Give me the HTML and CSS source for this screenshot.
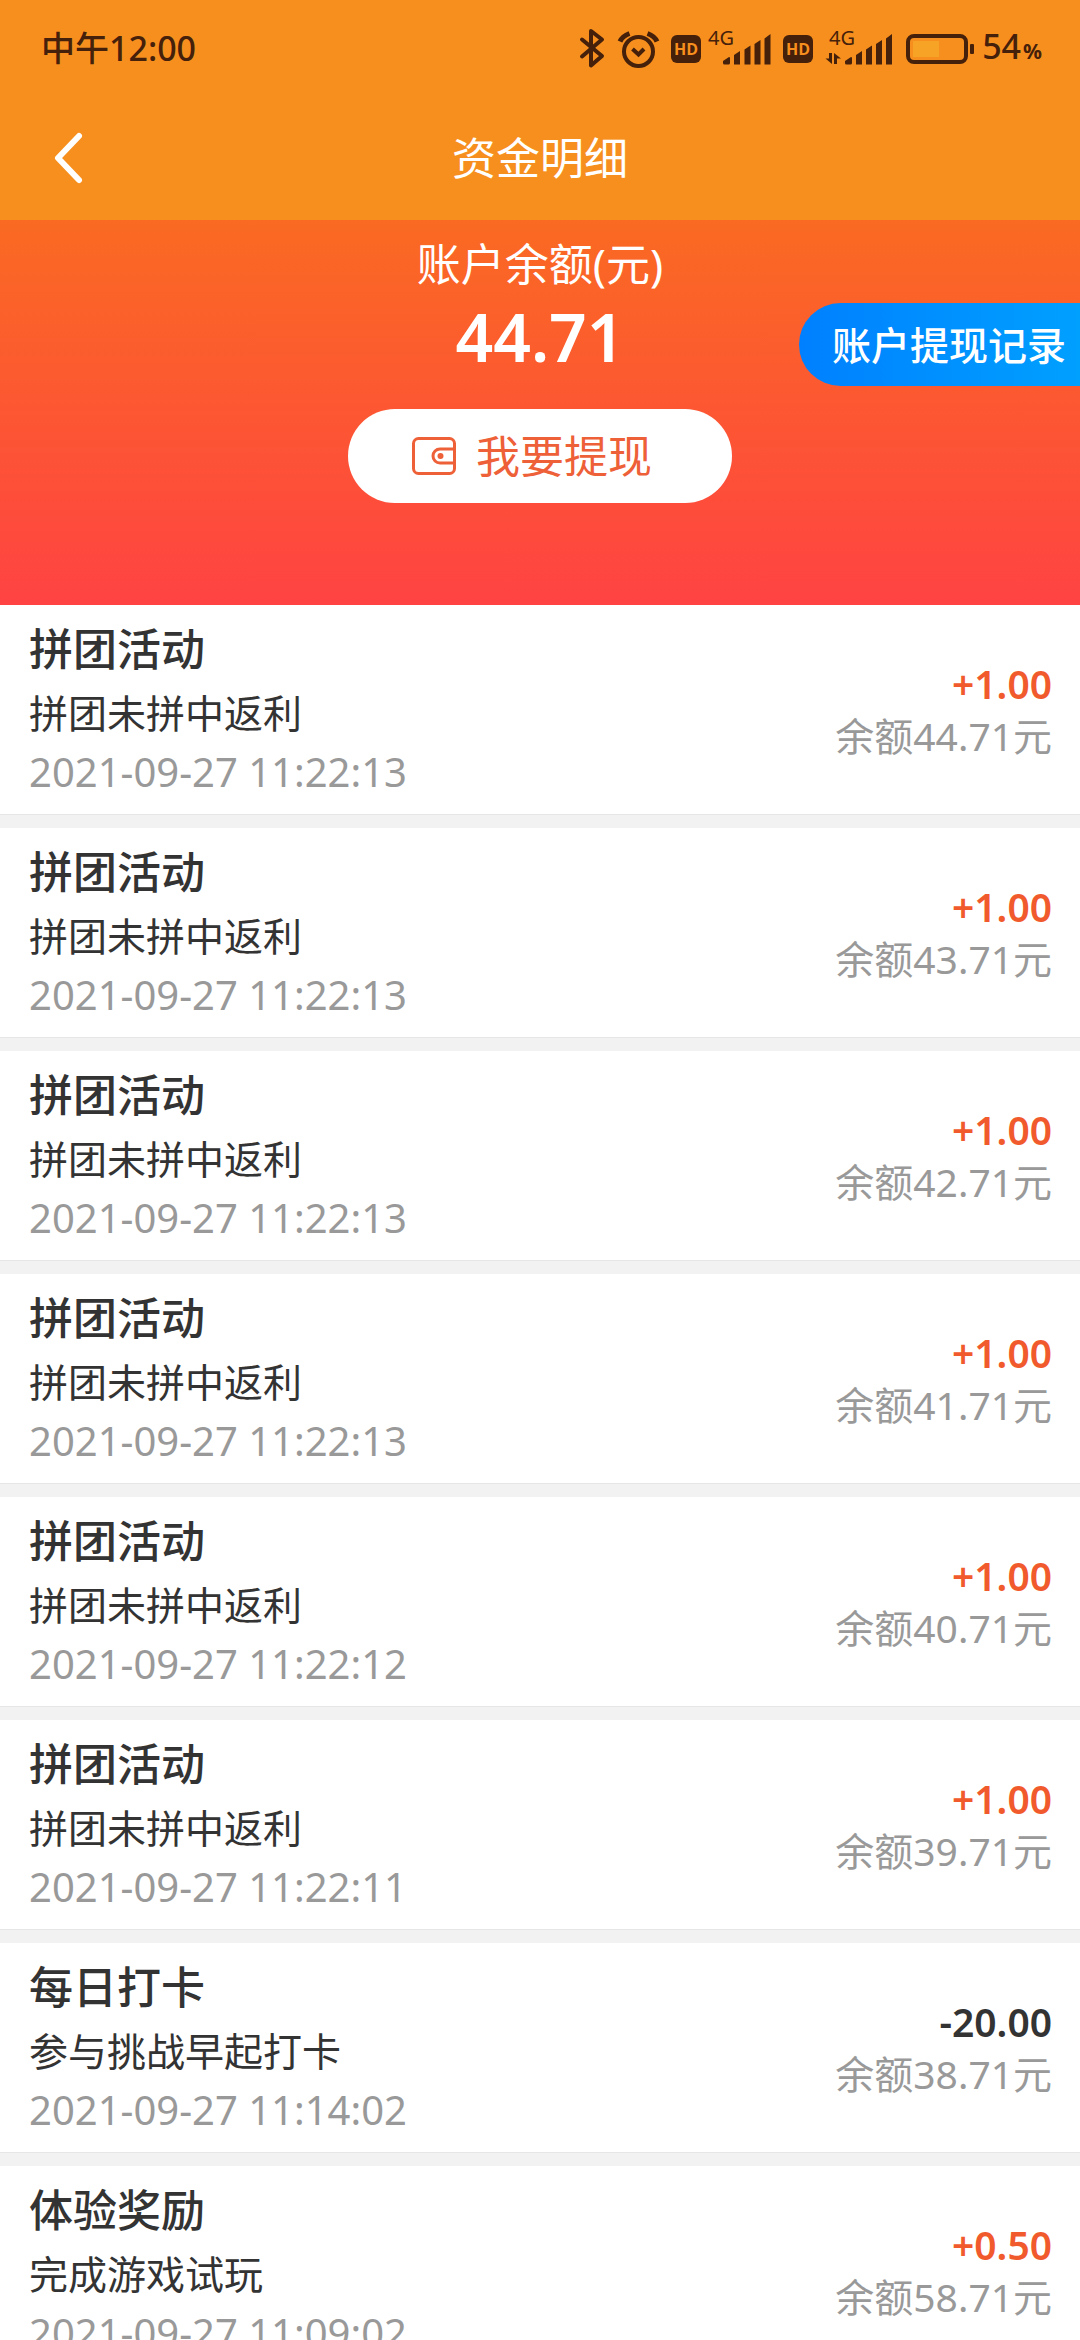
FILE: index.html
```html
<!DOCTYPE html>
<html lang="zh-CN">
<head>
<meta charset="utf-8">
<meta name="viewport" content="width=device-width, initial-scale=1">
<title>资金明细</title>
<link rel="stylesheet" href="styles.css">
</head>
<body>
<div class="app">
  <div class="status">
    <span class="status-time">中午12:00</span>
    <div class="status-icons">
      <svg width="34" height="44" viewBox="0 0 34 44" fill="none" stroke="#45200a" stroke-width="4" stroke-linejoin="round" stroke-linecap="round"><path d="M5 13.500L25 30L14 39.500V5L25 13.500L5 30.500"/></svg>
      <svg width="44" height="44" viewBox="0 0 44 44" fill="none" stroke="#45200a"><circle cx="21.500" cy="25.500" r="14.500" stroke-width="4"/><path d="M15.500 23L21.500 28.500L27 23" stroke-width="4"/><path d="M3 15.500Q5.500 10 12.500 7.500M40 15.500Q37.500 10 30.500 7.500" stroke-width="5"/></svg>
      <svg width="34" height="44" viewBox="0 0 34 44"><rect x="4" y="9" width="30" height="28" rx="6" fill="#45200a"/><text class="hd" x="19" y="29" text-anchor="middle">HD</text></svg>
      <svg width="66" height="44" viewBox="0 0 66 44" fill="#45200a"><text class="net" x="1" y="19">4G</text><path d="M16 35L22 31Q23 31 23 32V37Q23 38.500 21.500 38.500H17.500Q16 38.500 16 37ZM27 29L33 25V38.500H27ZM37.500 23.500L43.500 19.500V38.500H37.500ZM47.500 18L53.500 14V38.500H47.500ZM57.500 12.500L63.500 8V38.500H57.500Z"/></svg>
      <svg width="34" height="44" viewBox="0 0 34 44"><rect x="4" y="9" width="30" height="28" rx="6" fill="#45200a"/><text class="hd" x="19" y="29" text-anchor="middle">HD</text></svg>
      <svg width="76" height="44" viewBox="0 0 76 44" fill="#45200a"><text class="net" x="10" y="19">4G</text><path d="M10 27H13V38L6.500 32.500H10ZM15 38V27L22 32.500H18V38Z"/><path d="M26 35L32 31Q33 31 33 32V37Q33 38.500 31.500 38.500H27.500Q26 38.500 26 37ZM37 29L43 25V38.500H37ZM47 23.500L53 19.500V38.500H47ZM57 18L63 14V38.500H57ZM67 12.500L73 8V38.500H67Z"/></svg>
      <svg width="75" height="44" viewBox="0 0 75 44"><rect x="7" y="10" width="58" height="26" rx="6" fill="none" stroke="#45200a" stroke-width="4"/><rect x="12" y="15" width="26" height="16" fill="#f7a325"/><rect x="69" y="18" width="4" height="10" rx="1" fill="#45200a"/></svg>
      <span class="battery-text">54<small>%</small></span>
    </div>
  </div>
  <header class="nav">
    <button class="back" type="button" aria-label="返回">
      <svg width="36" height="60" viewBox="0 0 36 60" fill="none" stroke="#fff" stroke-width="6" stroke-linecap="round" stroke-linejoin="round"><path d="M29 8L8 30L29 52"/></svg>
    </button>
    <h1 class="nav-title">资金明细</h1>
  </header>
  <section class="hero">
    <p class="hero-label">账户余额(元)</p>
    <p class="hero-amount">44.71</p>
    <button class="withdraw" type="button">
      <svg width="44" height="38" viewBox="0 0 44 38" fill="none" stroke="#ee6038" stroke-width="3"><rect x="1.500" y="1.500" width="41" height="35" rx="5"/><path d="M42 12H28a7 7 0 0 0 0 14H42"/><circle cx="28.500" cy="19" r="3" fill="#ee6038" stroke="none"/></svg>
      <span>我要提现</span>
    </button>
    <a class="records" href="#records">账户提现记录</a>
  </section>
  <ul class="list">
    <li class="row"><div class="info"><h2>拼团活动</h2><p>拼团未拼中返利</p><time>2021-09-27 11:22:13</time></div><div class="sum"><strong>+1.00</strong><span>余额44.71元</span></div></li>
    <li class="row"><div class="info"><h2>拼团活动</h2><p>拼团未拼中返利</p><time>2021-09-27 11:22:13</time></div><div class="sum"><strong>+1.00</strong><span>余额43.71元</span></div></li>
    <li class="row"><div class="info"><h2>拼团活动</h2><p>拼团未拼中返利</p><time>2021-09-27 11:22:13</time></div><div class="sum"><strong>+1.00</strong><span>余额42.71元</span></div></li>
    <li class="row"><div class="info"><h2>拼团活动</h2><p>拼团未拼中返利</p><time>2021-09-27 11:22:13</time></div><div class="sum"><strong>+1.00</strong><span>余额41.71元</span></div></li>
    <li class="row"><div class="info"><h2>拼团活动</h2><p>拼团未拼中返利</p><time>2021-09-27 11:22:12</time></div><div class="sum"><strong>+1.00</strong><span>余额40.71元</span></div></li>
    <li class="row"><div class="info"><h2>拼团活动</h2><p>拼团未拼中返利</p><time>2021-09-27 11:22:11</time></div><div class="sum"><strong>+1.00</strong><span>余额39.71元</span></div></li>
    <li class="row"><div class="info"><h2>每日打卡</h2><p>参与挑战早起打卡</p><time>2021-09-27 11:14:02</time></div><div class="sum"><strong class="out">-20.00</strong><span>余额38.71元</span></div></li>
    <li class="row"><div class="info"><h2>体验奖励</h2><p>完成游戏试玩</p><time>2021-09-27 11:09:02</time></div><div class="sum"><strong>+0.50</strong><span>余额58.71元</span></div></li>
  </ul>
</div>
</body>
</html>
```
FILE: styles.css
```css
* {
  box-sizing: border-box;
}

body,
h1,
h2,
p,
ul {
  margin: 0;
  padding: 0;
}

body {
  font-family: "Noto Sans", "Noto Sans CJK SC", sans-serif;
  color: #333;
  background: #f2f2f2;
}

button {
  border: 0;
  padding: 0;
  font-family: inherit;
  cursor: pointer;
}

svg {
  display: block;
  flex: none;
  overflow: visible;
}

.app {
  display: flex;
  flex-direction: column;
  height: 100vh;
}

.status {
  flex: none;
  display: flex;
  align-items: center;
  justify-content: space-between;
  height: 96px;
  padding: 0 38px 0 41px;
  background: #f78f1e;
  color: #45200a;
  font-weight: 500;
}

.status-time {
  font-size: 34px;
  line-height: 44px;
}

.status-icons {
  display: flex;
  align-items: center;
  gap: 6px;
}

.battery-text {
  font-size: 34px;
  line-height: 44px;
}

.battery-text small {
  margin-left: 2px;
  font-size: 21px;
  font-weight: 700;
}

.hd {
  font: 700 16px "Open Sans", sans-serif;
  fill: #f78f1e;
}

.net {
  font: 400 20px "Noto Sans", sans-serif;
}

.nav {
  flex: none;
  display: grid;
  grid-template-columns: 100px 1fr 100px;
  align-items: center;
  height: 124px;
  background: #f78f1e;
  color: #fff;
}

.back {
  display: flex;
  align-items: center;
  height: 124px;
  padding-left: 50px;
  background: none;
}

.nav-title {
  grid-column: 2;
  font-size: 44px;
  font-weight: 400;
  line-height: 60px;
  text-align: center;
}

.hero {
  flex: none;
  position: relative;
  display: flex;
  flex-direction: column;
  align-items: center;
  padding: 14px 0 102px;
  background: linear-gradient(#fa6a22, #ff4343);
  color: #fff;
}

.hero-label {
  font-size: 44px;
  line-height: 60px;
}

.hero-amount {
  font-size: 66px;
  font-weight: 600;
  line-height: 84px;
}

.withdraw {
  display: flex;
  align-items: center;
  justify-content: center;
  gap: 20px;
  height: 94px;
  margin-top: 31px;
  padding: 0 80px 0 64px;
  border-radius: 47px;
  background: #fff;
  color: #ee6038;
  font-size: 44px;
  line-height: 60px;
}

.records {
  position: absolute;
  top: 83px;
  right: 0;
  padding: 0 14px 0 33px;
  border-radius: 42px 0 0 42px;
  background: linear-gradient(90deg, #0080ff, #00a0ff);
  color: #fff;
  font-size: 39px;
  font-weight: 500;
  line-height: 83px;
  text-decoration: none;
}

.list {
  flex: 1;
  min-height: 0;
  overflow-y: auto;
  scrollbar-width: none;
  list-style: none;
}

.row {
  display: flex;
  align-items: center;
  justify-content: space-between;
  margin-bottom: 14px;
  padding: 14px 28px 11px 29px;
  background: #fff;
  box-shadow: 0 1px #e6e6e6;
}

.info h2 {
  margin-bottom: 4px;
  font-size: 44px;
  font-weight: 500;
  line-height: 60px;
}

.info p {
  font-size: 39px;
  line-height: 60px;
}

.info time {
  display: block;
  color: #999;
  font-size: 40px;
  line-height: 58px;
  padding-bottom: 2px;
}

.sum {
  display: flex;
  flex-direction: column;
  align-items: flex-end;
  padding-bottom: 2px;
  font-size: 39px;
  line-height: 52px;
}

.sum strong {
  color: #f15a2c;
  font-weight: 600;
}

.sum .out {
  color: #333;
}

.sum span {
  color: #999;
}
```
